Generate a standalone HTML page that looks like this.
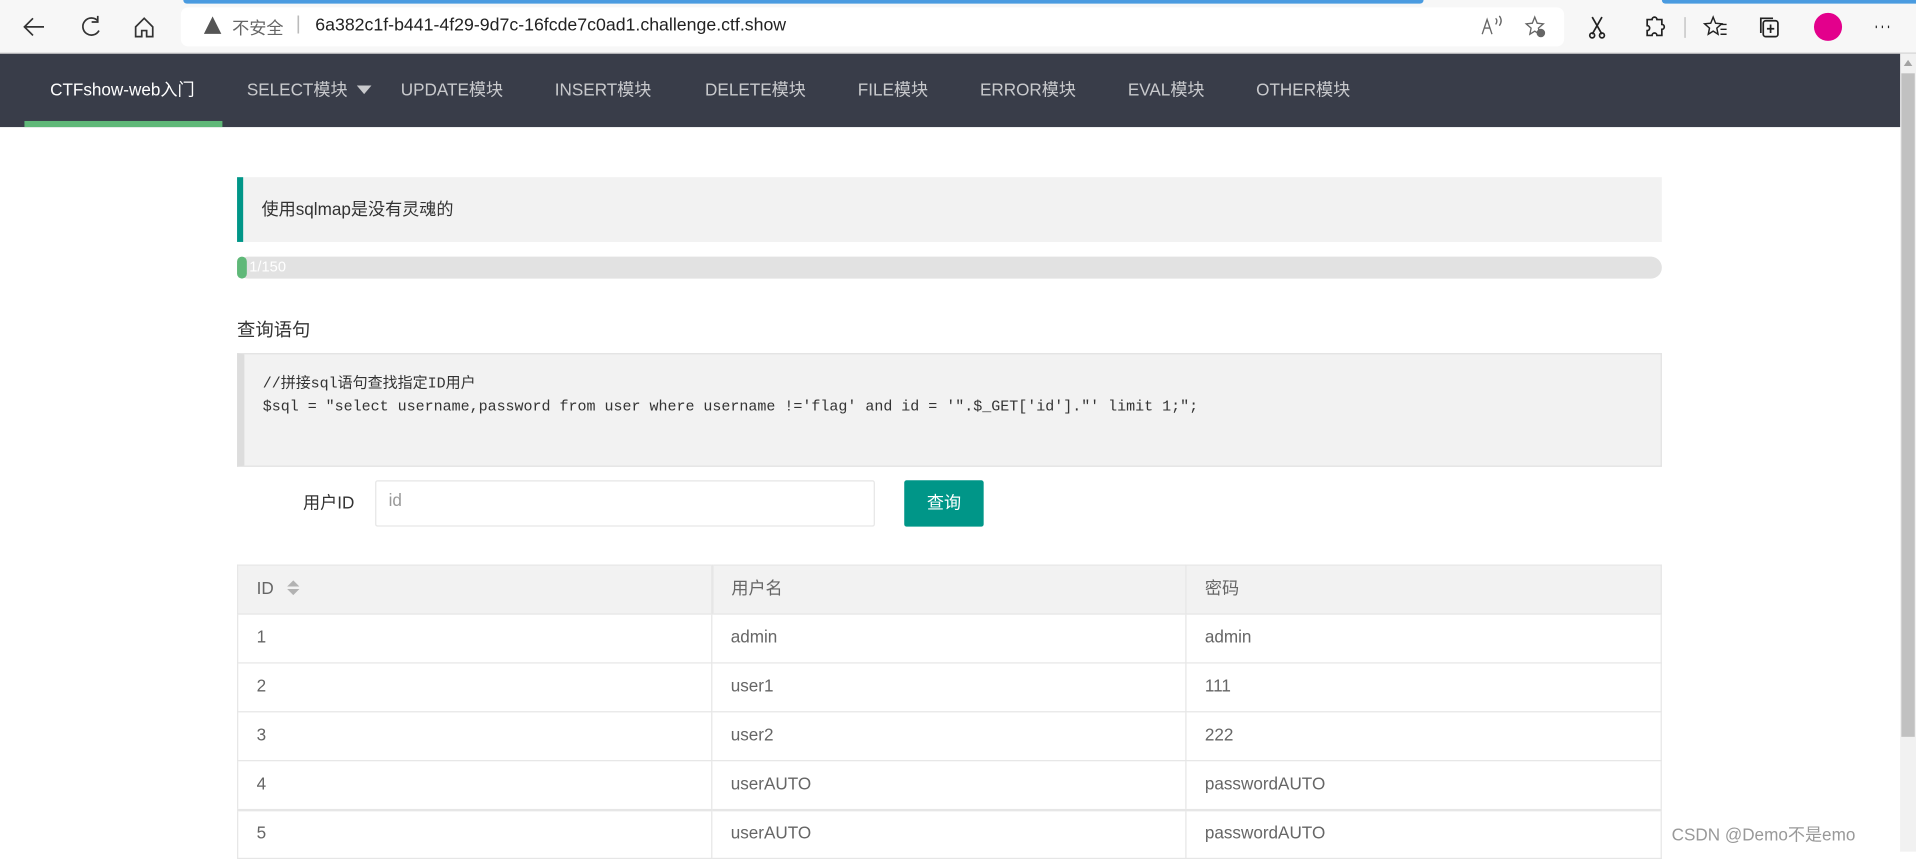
<!DOCTYPE html>
<html><head><meta charset="utf-8"><style>
html,body{margin:0;padding:0;width:1916px;height:852px;overflow:hidden;background:#fff;}
#w{position:absolute;left:0;top:0;width:1568px;height:697px;transform:scale(1.22194);transform-origin:0 0;font-family:"Liberation Sans","Noto Sans CJK SC",sans-serif;}
.a{position:absolute;}
.nav span{position:absolute;font-size:14px;color:rgba(255,255,255,.72);white-space:nowrap;}
.mono{font-family:"Liberation Mono","Noto Sans CJK SC",monospace;font-size:12.28px;color:#333;white-space:pre;}
table{border-collapse:collapse;position:absolute;left:194px;top:462px;width:1166px;font-size:14px;color:#666;}
td,th{border:1px solid #e6e6e6;height:40px;padding:0 15px 3px;box-sizing:border-box;text-align:left;font-weight:normal;}
th{background:#f2f2f2;}
</style></head><body><div id="w">
<div class="a" style="left:0;top:0;width:1568px;height:44px;background:#f7f7f7;border-bottom:1px solid #d0d0d0;box-sizing:border-box"></div>
<div class="a" style="left:150px;top:0;width:1015px;height:3px;background:#4a9be0;border-radius:0 0 4px 4px"></div>
<div class="a" style="left:1360px;top:0;width:208px;height:3px;background:#4a9be0;border-radius:0 0 0 4px"></div>
<div class="a" style="left:148px;top:6px;width:1132px;height:32px;background:#fff;border-radius:6px"></div>
<svg class="a" style="left:0;top:0" width="1568" height="44" fill="none" stroke="#333" stroke-width="1.4">
<path d="M36 22H20M27 15l-7 7 7 7"/>
<path d="M80 17a7 7 0 1 0 1 8M80 13v5h-5" />
<path d="M111 22l7-7 7 7v8h-5v-5h-4v5h-5z"/>
<path d="M174 15l6 12h-12z" fill="#555" stroke="#555"/>
<path d="M1213 28l4-12 4 12M1215 23h4M1224 15q2 2 0 5M1227 13q3 4 0 8" stroke="#666" stroke-width="1.1"/>
<path d="M1256 14l2 5 5 .5-4 3.5 1 5-4-2.5-4 2.5 1-5-4-3.5 5-.5z" stroke="#666" stroke-width="1.1"/>
<circle cx="1261" cy="27" r="3.5" fill="#666" stroke="none"/>
<path d="M1303 14l8 14M1311 14l-8 14" stroke="#222"/><circle cx="1303" cy="29" r="2" stroke="#222"/><circle cx="1311" cy="29" r="2" stroke="#222"/>
<path d="M1348 16h4a2 2 0 0 1 4 0h4v4a2 2 0 0 1 0 4v5h-4a2 2 0 0 0-4 0h-4v-4a2 2 0 0 0 0-4z" stroke="#222"/>
<path d="M1379 14v17" stroke="#ccc"/>
<path d="M1402 14l2 5 5 .5-4 3.5 1 5-4-2.5-4 2.5 1-5-4-3.5 5-.5zM1408 20h5M1408 24h5M1408 28h5" stroke="#222" stroke-width="1.2"/>
<rect x="1443" y="17" width="12" height="13" rx="2" stroke="#222"/><path d="M1441 27v-12h10M1449 20v7M1446 23.5h6" stroke="#222"/>
<circle cx="1496" cy="22" r="11.5" fill="#e3008c" stroke="none"/>
<path d="M1535 22h1M1540 22h1M1545 22h1" stroke="#222" stroke-width="2"/>
</svg>
<div class="a" style="left:190px;top:13px;font-size:14px;color:#666">不安全</div>
<div class="a" style="left:242px;top:11px;font-size:16px;color:#bbb">|</div>
<div class="a" style="left:258px;top:13px;font-size:14.5px;color:#222">6a382c1f-b441-4f29-9d7c-16fcde7c0ad1.challenge.ctf.show</div>
<div class="a" style="left:1555px;top:44px;width:13px;height:653px;background:#f1f1f1"></div>
<div class="a" style="left:1556px;top:60px;width:11px;height:543px;background:#c1c1c1"></div>
<svg class="a" style="left:1555px;top:46px" width="13" height="10"><path d="M3 8l3.5-5 3.5 5z" fill="#a3a3a3"/></svg>
<div class="a nav" style="left:0;top:44px;width:1555px;height:60px;background:#393d49">
<span style="left:41px;top:19px;color:#fff">CTFshow-web入门</span>
<span style="left:202px;top:19px">SELECT模块</span>
<svg style="position:absolute;left:292px;top:25px" width="12" height="8"><path d="M0 1h12L6 8z" fill="rgba(255,255,255,.72)"/></svg>
<span style="left:328px;top:19px">UPDATE模块</span>
<span style="left:454px;top:19px">INSERT模块</span>
<span style="left:577px;top:19px">DELETE模块</span>
<span style="left:702px;top:19px">FILE模块</span>
<span style="left:802px;top:19px">ERROR模块</span>
<span style="left:923px;top:19px">EVAL模块</span>
<span style="left:1028px;top:19px">OTHER模块</span>
<div class="a" style="left:20px;top:55px;width:162px;height:5px;background:#5fb878"></div>
</div>
<div class="a" style="left:194px;top:145px;width:1166px;height:53px;background:#f2f2f2;border-left:5px solid #009688;box-sizing:border-box"></div>
<div class="a" style="left:214px;top:161px;font-size:14px;color:#333">使用sqlmap是没有灵魂的</div>
<div class="a" style="left:194px;top:210px;width:1166px;height:18px;background:#e2e2e2;border-radius:9px"></div>
<div class="a" style="left:194px;top:210px;width:8px;height:18px;background:#5fb878;border-radius:9px"></div>
<div class="a" style="left:204px;top:211px;font-size:12px;color:#fff">1/150</div>
<div class="a" style="left:194px;top:259px;font-size:15px;color:#333">查询语句</div>
<div class="a" style="left:194px;top:289px;width:1166px;height:93px;background:#f2f2f2;border:1px solid #e2e2e2;border-left:6px solid #ddd;box-sizing:border-box"></div>
<div class="a mono" style="left:215px;top:303px">//拼接sql语句查找指定ID用户</div>
<div class="a mono" style="left:215px;top:326px">$sql = "select username,password from user where username !='flag' and id = '".$_GET['id']."' limit 1;";</div>
<div class="a" style="left:248px;top:401px;font-size:14px;color:#333">用户ID</div>
<div class="a" style="left:307px;top:393px;width:409px;height:38px;border:1px solid #e6e6e6;box-sizing:border-box;border-radius:2px"></div>
<div class="a" style="left:318px;top:401px;font-size:14px;color:#999">id</div>
<div class="a" style="left:740px;top:393px;width:65px;height:38px;background:#009688;border-radius:2px;color:#fff;font-size:14px;text-align:center;line-height:36px">查询</div>
<table>
<tr><th style="width:388px">ID <svg width="12" height="14" style="vertical-align:-2px;margin-left:6px"><path d="M1 6l5-5 5 5zM1 8l5 5 5-5z" fill="#b2b2b2"/></svg></th><th style="width:388px;border-left:2px solid #e6e6e6">用户名</th><th>密码</th></tr>
<tr><td>1</td><td>admin</td><td>admin</td></tr>
<tr><td>2</td><td>user1</td><td>111</td></tr>
<tr><td>3</td><td>user2</td><td>222</td></tr>
<tr><td>4</td><td>userAUTO</td><td>passwordAUTO</td></tr>
<tr><td style="border-top:2px solid #e6e6e6">5</td><td style="border-top:2px solid #e6e6e6">userAUTO</td><td style="border-top:2px solid #e6e6e6">passwordAUTO</td></tr>
</table>
<div class="a" style="left:1368px;top:673px;font-size:14px;color:#999;text-shadow:0 0 2px #fff">CSDN @Demo不是emo</div>
</div></body></html>
